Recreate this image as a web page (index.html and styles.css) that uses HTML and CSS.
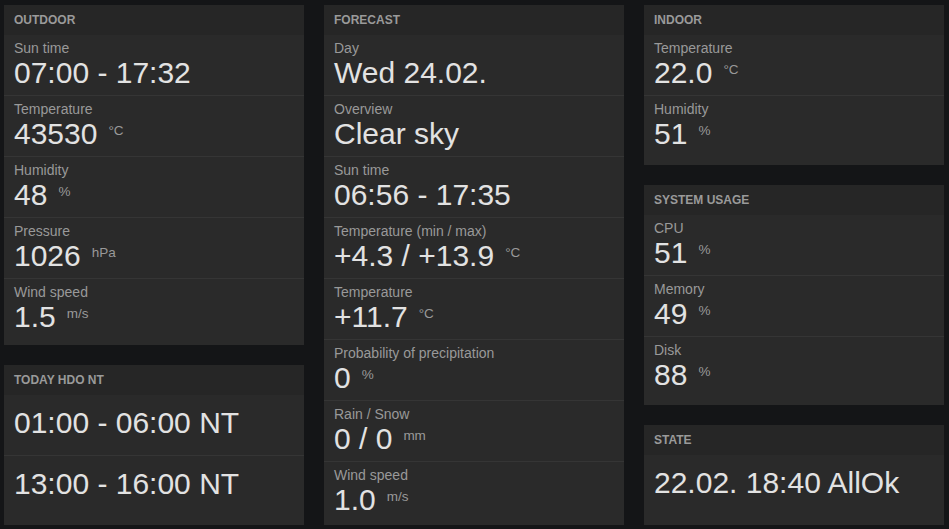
FILE: index.html
```html
<!DOCTYPE html>
<html>
<head>
<meta charset="utf-8">
<link rel="stylesheet" href="styles.css">
</head>
<body>
<div class="board">
  <div class="col">
    <section class="panel h-outdoor">
      <div class="head">Outdoor</div>
      <div class="row"><div class="label">Sun time</div><div class="val">07:00 - 17:32</div></div>
      <div class="row"><div class="label">Temperature</div><div class="val">43530<span class="unit">°C</span></div></div>
      <div class="row"><div class="label">Humidity</div><div class="val">48<span class="unit">%</span></div></div>
      <div class="row"><div class="label">Pressure</div><div class="val">1026<span class="unit">hPa</span></div></div>
      <div class="row"><div class="label">Wind speed</div><div class="val">1.5<span class="unit">m/s</span></div></div>
    </section>
    <section class="panel h-hdo">
      <div class="head">Today HDO NT</div>
      <div class="row plain"><div class="val">01:00 - 06:00 NT</div></div>
      <div class="row plain"><div class="val">13:00 - 16:00 NT</div></div>
    </section>
  </div>
  <div class="col">
    <section class="panel h-forecast">
      <div class="head">Forecast</div>
      <div class="row"><div class="label">Day</div><div class="val">Wed 24.02.</div></div>
      <div class="row"><div class="label">Overview</div><div class="val">Clear sky</div></div>
      <div class="row"><div class="label">Sun time</div><div class="val">06:56 - 17:35</div></div>
      <div class="row"><div class="label">Temperature (min / max)</div><div class="val">+4.3 / +13.9<span class="unit">°C</span></div></div>
      <div class="row"><div class="label">Temperature</div><div class="val">+11.7<span class="unit">°C</span></div></div>
      <div class="row"><div class="label">Probability of precipitation</div><div class="val">0<span class="unit">%</span></div></div>
      <div class="row"><div class="label">Rain / Snow</div><div class="val">0 / 0<span class="unit">mm</span></div></div>
      <div class="row"><div class="label">Wind speed</div><div class="val">1.0<span class="unit">m/s</span></div></div>
    </section>
  </div>
  <div class="col">
    <section class="panel h-indoor">
      <div class="head">Indoor</div>
      <div class="row"><div class="label">Temperature</div><div class="val">22.0<span class="unit">°C</span></div></div>
      <div class="row"><div class="label">Humidity</div><div class="val">51<span class="unit">%</span></div></div>
    </section>
    <section class="panel h-system">
      <div class="head">System usage</div>
      <div class="row"><div class="label">CPU</div><div class="val">51<span class="unit">%</span></div></div>
      <div class="row"><div class="label">Memory</div><div class="val">49<span class="unit">%</span></div></div>
      <div class="row"><div class="label">Disk</div><div class="val">88<span class="unit">%</span></div></div>
    </section>
    <section class="panel h-state">
      <div class="head">State</div>
      <div class="row plain"><div class="val">22.02. 18:40 AllOk</div></div>
    </section>
  </div>
</div>
</body>
</html>
```
FILE: styles.css
```css
html, body {
  margin: 0;
  padding: 0;
  background: #141517;
  font-family: "Liberation Sans", Arial, sans-serif;
}
.board {
  display: flex;
  gap: 20px;
  padding: 5px 5px 4px 4px;
}
.col {
  width: 300px;
  display: flex;
  flex-direction: column;
  gap: 20px;
}
.panel {
  background: #2a2a2a;
  box-sizing: border-box;
  overflow: hidden;
}
.h-outdoor { height: 340px; }
.h-hdo { height: 160px; }
.h-forecast { height: 520px; }
.h-indoor { height: 160px; }
.h-system { height: 220px; }
.h-state { height: 100px; }
.head {
  height: 30px;
  line-height: 30px;
  padding: 0 10px;
  background: #262626;
  color: #9a9a9a;
  font-size: 12px;
  font-weight: bold;
  text-transform: uppercase;
}
.row {
  height: 61px;
  box-sizing: border-box;
  padding: 5px 10px 0;
  border-bottom: 1px solid #353535;
}
.row:last-child { border-bottom: none; }
.label {
  color: #999;
  font-size: 14px;
  line-height: 16px;
}
.val {
  display: flex;
  align-items: flex-start;
  color: #e2e2e2;
  font-size: 30px;
  line-height: 33px;
}
.unit {
  color: #999;
  font-size: 13.5px;
  line-height: 16px;
  margin-left: 11px;
  margin-top: 5.5px;
}
.row.plain {
  padding-top: 10.5px;
}
```
